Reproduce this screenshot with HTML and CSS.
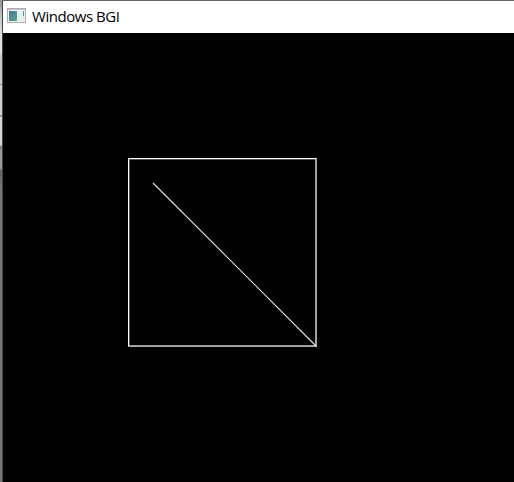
FILE: index.html
```
<!DOCTYPE html>
<html lang="en">
<head>
<meta charset="utf-8">
<title>Windows BGI</title>
<link rel="stylesheet" href="styles.css">
</head>
<body>
<div class="desktop">
  <div class="backdrop"></div>
  <main class="window">
    <header class="titlebar">
      <svg class="app-icon" width="20" height="16" viewBox="0 0 20 16">
        <defs>
          <linearGradient id="pane" x1="0" y1="0" x2="1" y2="1">
            <stop offset="0" stop-color="#4674a0"/>
            <stop offset="1" stop-color="#55aa83"/>
          </linearGradient>
        </defs>
        <rect x=".5" y=".5" width="18" height="14" fill="#f1f3f3" stroke="#a9adb3"/>
        <path d="M1 1.5h17" stroke="#c3c8cb"/>
        <rect x="2" y="3" width="8" height="10" fill="url(#pane)"/>
        <rect x="11" y="3" width="4" height="10" fill="#e9eded"/>
        <path d="M16.5 3v5" stroke="#5c8a9c"/>
        <path d="M16.5 8v5" stroke="#dce5e3"/>
      </svg>
      <h1 class="title">Windows BGI</h1>
    </header>
    <svg class="canvas" width="511" height="449" viewBox="3 33 511 449">
      <path d="M128 158.5h188" stroke="#fff"/>
      <path d="M128.5 158v188" stroke="#fff"/>
      <path d="M129 159.5h187M129.5 159v187" stroke="#555"/>
      <path d="M315.5 159v187M129 345.5h187" stroke="#999"/>
      <path d="M316.5 158v189M128 346.5h189" stroke="#aaa"/>
      <path d="M153 183L316 346" stroke="#e0e0e0" stroke-width="1.1"/>
      <path d="M315 345h1v1h-1z" fill="#fff"/>
    </svg>
  </main>
</div>
</body>
</html>
```
FILE: styles.css
```
body {
  margin: 0;
  overflow: hidden;
  background: #000;
}

.desktop {
  display: flex;
  width: 514px;
  height: 482px;
}

.backdrop {
  width: 2px;
  background: linear-gradient(#999 0 4px, #bbb 12px, #e0e0e0 34px 53px, #ccc 54px 84px, #888 84px 85px, #d0d0d0 85px 115px, #888 115px 116px, #d5d5d5 117px 145px, #777 147px, #999 150px 168px, #666 171px, #777 190px);
}

.window {
  box-sizing: border-box;
  width: 512px;
  height: 482px;
  border-top: 1px solid #666;
  border-left: 1px solid #444;
  background: #000;
}

.titlebar {
  display: flex;
  align-items: center;
  box-sizing: border-box;
  height: 32px;
  padding: 0 0 2px 4px;
  gap: 5px;
  background: #fff;
}

.app-icon {
  flex: none;
}

.title {
  margin: 0;
  color: #000;
  font: 400 15px/20px "Open Sans", "Noto Sans", sans-serif;
  letter-spacing: -0.45px;
  white-space: nowrap;
}

.canvas {
  display: block;
}
```
